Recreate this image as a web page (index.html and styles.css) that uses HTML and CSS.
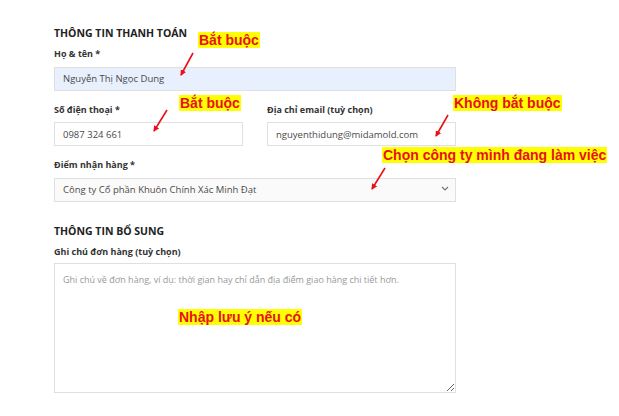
FILE: index.html
```html
<!DOCTYPE html>
<html lang="vi">
<head>
    <meta charset="UTF-8">
    <meta name="viewport" content="width=device-width, initial-scale=1.0">
    <title>Thanh toán</title>
    <link rel="stylesheet" href="styles.css">
</head>
<body>
    <form class="checkout">
        <h3 class="section-title">THÔNG TIN THANH TOÁN</h3>

        <div class="field">
            <label for="fullname">Họ &amp; tên *</label>
            <input type="text" id="fullname" class="autofilled" value="Nguyễn Thị Ngọc Dung">
        </div>

        <div class="field-row">
            <div class="field">
                <label for="phone">Số điện thoại *</label>
                <input type="text" id="phone" value="0987 324 661">
            </div>
            <div class="field">
                <label for="email">Địa chỉ email (tuỳ chọn)</label>
                <input type="text" id="email" value="nguyenthidung@midamold.com">
            </div>
        </div>

        <div class="field">
            <label for="pickup">Điểm nhận hàng *</label>
            <div class="select-wrap">
                <select id="pickup">
                    <option>Công ty Cổ phần Khuôn Chính Xác Minh Đạt</option>
                </select>
                <svg class="chevron" width="8" height="5" viewBox="0 0 8 5"><path d="M1 1l3 3 3-3" fill="none" stroke="#777" stroke-width="1.2"/></svg>
            </div>
        </div>

        <h3 class="section-title extra">THÔNG TIN BỔ SUNG</h3>

        <div class="field">
            <label for="note">Ghi chú đơn hàng (tuỳ chọn)</label>
            <textarea id="note" placeholder="Ghi chú về đơn hàng, ví dụ: thời gian hay chỉ dẫn địa điểm giao hàng chi tiết hơn."></textarea>
        </div>
    </form>

    <!-- chú thích hướng dẫn -->
    <span class="note note-name">Bắt buộc</span>
    <span class="note note-phone">Bắt buộc</span>
    <span class="note note-email">Không bắt buộc</span>
    <span class="note note-pickup">Chọn công ty mình đang làm việc</span>
    <span class="note note-extra">Nhập lưu ý nếu có</span>

    <svg class="arrows" width="619" height="416" viewBox="0 0 619 416">
        <defs>
            <marker id="head" markerWidth="6" markerHeight="6" refX="5" refY="3" orient="auto" markerUnits="userSpaceOnUse">
                <path d="M0 0L6 3L0 6z" fill="#e8101a"/>
            </marker>
        </defs>
        <g stroke="#e8101a" stroke-width="1.6" marker-end="url(#head)">
            <line x1="193" y1="53" x2="181" y2="75"/>
            <line x1="167" y1="110" x2="154" y2="131"/>
            <line x1="448" y1="115" x2="436" y2="136"/>
            <line x1="385" y1="168" x2="372" y2="189"/>
        </g>
    </svg>
</body>
</html>
```

FILE: styles.css
```css
body {
    margin: 0;
    font-family: "Open Sans", "Noto Sans", sans-serif;
    background: #fff;
    color: #333;
}
.checkout {
    width: 402px;
    margin-left: 54px;
    padding-top: 26px;
}
.section-title {
    margin: 0 0 8px;
    font-size: 10.5px;
    line-height: 14px;
    font-weight: 700;
    color: #222;
}
.section-title.extra {
    margin-top: 22px;
}
.field {
    margin-bottom: 13px;
}
.field label {
    display: block;
    font-size: 9px;
    line-height: 12px;
    font-weight: 700;
    color: #333;
    margin-bottom: 5px;
}
.field-row {
    display: grid;
    grid-template-columns: 1fr 1fr;
    column-gap: 24px;
}
input,
select,
textarea {
    box-sizing: border-box;
    width: 100%;
    height: 24px;
    margin: 0;
    padding: 0 8px;
    border: 1px solid #e0e0e0;
    border-radius: 0;
    background: #fff;
    font-family: inherit;
    font-size: 9.5px;
    color: #4a4a4a;
    outline: none;
}
input.autofilled {
    background: #e8f0fe;
}
.select-wrap {
    position: relative;
}
select {
    appearance: none;
    -webkit-appearance: none;
    background: #fafafa;
}
.chevron {
    position: absolute;
    right: 7px;
    top: 10px;
}
textarea {
    display: block;
    height: 130px;
    padding: 9px 8px;
    resize: vertical;
    font-size: 9px;
    line-height: 13px;
}
textarea::placeholder {
    color: #999;
}
.note {
    position: absolute;
    background: #ffff00;
    color: #e8101a;
    font-family: "Liberation Sans", Arial, sans-serif;
    font-weight: 700;
    font-size: 14px;
    line-height: 16px;
    padding: 0 1px;
}
.note-name { left: 198px; top: 32px; }
.note-phone { left: 179px; top: 95px; }
.note-email { left: 453px; top: 95px; }
.note-pickup { left: 382px; top: 147px; }
.note-extra { left: 178px; top: 309px; }
.arrows {
    position: absolute;
    left: 0;
    top: 0;
    pointer-events: none;
}
```
